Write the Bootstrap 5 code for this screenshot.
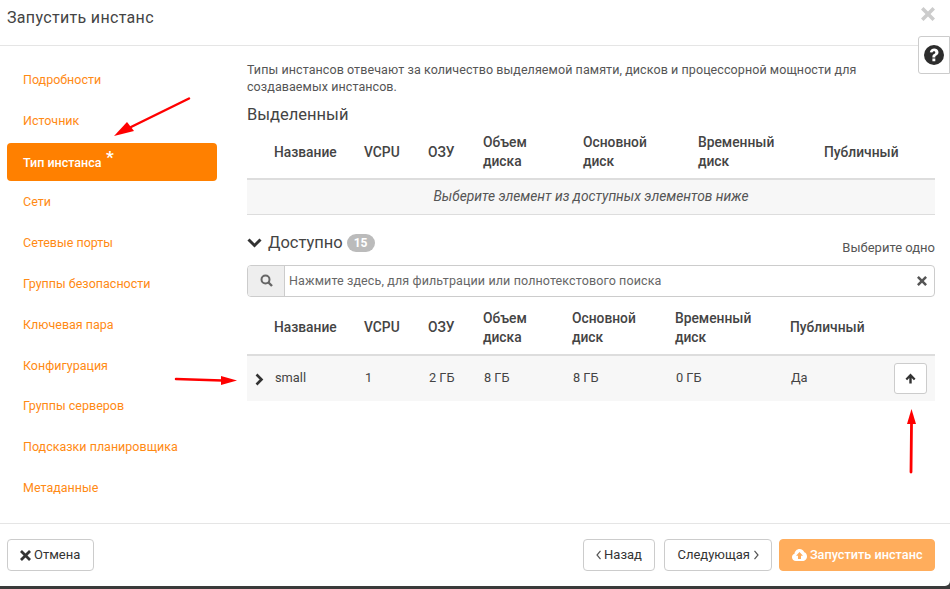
<!DOCTYPE html>
<html lang="ru"><head><meta charset="utf-8"><title>Запустить инстанс</title>
<link href="https://cdn.jsdelivr.net/npm/bootstrap@5.3.0/dist/css/bootstrap.min.css" rel="stylesheet">
<style>
html,body{height:589px;overflow:hidden;background:#fff}
body{font-family:Roboto,"Liberation Sans",sans-serif;font-size:13px;color:#333;position:relative}
.dlg{height:586px;display:flex;flex-direction:column;border-bottom-right-radius:5px;background:#fff}
.wrapper{height:589px;background:#3a3a3a}
.dlg-head{height:46px;border-bottom:1px solid #e5e5e5;padding:9px 7px 0;flex:none;position:relative}
.dlg-title{font-size:16px;line-height:18px;color:#444;margin:0;font-weight:400;letter-spacing:.33px}
.dlg-close{position:absolute;right:15px;top:7px;width:14px;height:14px}
.help-box{position:absolute;right:0;top:36px;width:32px;height:38px;background:#fff;border:1px solid #ccc;border-radius:3px 0 0 3px;display:flex;align-items:center;justify-content:center}
.dlg-main{flex:1;display:flex;min-height:0}
.side{width:240px;flex:none;padding:15px 23px 0 7px}
.side-link{display:block;height:38px;line-height:38px;margin-bottom:2.8px;padding-left:16px;color:#ff8a14;font-size:12.5px;text-decoration:none;border-radius:4px}
.side-link.on{background:#ff8000;color:#fff;font-weight:500;position:relative;margin-top:2.800px;margin-bottom:2.800px;line-height:39px}
.req{position:absolute;left:99px;top:4px;font-size:17px;line-height:20px;font-weight:700}
.pane{flex:1;padding:15px 15px 0 7px;min-width:0}
.intro{font-size:12.5px;line-height:17px;color:#555;margin:0;letter-spacing:.08px}
.h-sel{font-size:16.500px;line-height:20px;color:#444;margin:10px 0 0;font-weight:400}
.tbl{width:100%;table-layout:fixed;border-collapse:collapse;margin:0;font-size:13.8px}
.tbl th{font-weight:500;color:#444;line-height:19px;padding:1px 0 0 0;vertical-align:middle;border-bottom:2px solid #ddd}
.tbl.one thead tr{height:54px}
.tbl.two thead tr{height:50px}
.tbl.two th{padding:0 0 3px}
.tbl td{vertical-align:middle;color:#444;background:#f7f7f7;font-size:12.800px}
.tbl td.empty{height:35px;text-align:center;font-style:italic;color:#555;border-bottom:1px solid #ddd;font-size:13.8px}
.avail-row{height:26px;margin-top:17px;display:flex;align-items:flex-start;justify-content:space-between}
.avail{font-size:16.500px;line-height:22px;color:#444;display:flex;align-items:center;gap:6px}
.cnt{background:#bbb;color:#fff;border-radius:9px;font-size:12px;font-weight:700;padding:0 7px;line-height:18px;margin-left:-2px}
.pick{font-size:13px;color:#555;line-height:15px;margin-top:8px}
.srch{height:32px;margin-top:7px;border:1px solid #ccc;border-radius:4px;display:flex;align-items:center;font-size:12.5px;color:#666}
.srch-add{width:37px;height:30px;background:#eee;border-right:1px solid #ccc;display:flex;align-items:center;justify-content:center;border-radius:3px 0 0 3px;flex:none}
.srch-text{flex:1;padding:1px 0 0 4px;letter-spacing:.12px}
.srch-x{margin-right:7px}
.row-small{height:46px}
.chev{margin-left:7px}
.cell-up{text-align:right;padding-right:8px}
.up-btn{width:33px;height:31px;background:#fff;border:1px solid #ccc;border-radius:3px;display:inline-flex;align-items:center;justify-content:center;padding:0;vertical-align:middle}
.dlg-foot{height:63px;flex:none;border-top:1px solid #e5e5e5;padding:15px 15px 0 7px;display:flex;justify-content:space-between}
.act{height:32px;line-height:30px;border:1px solid #ccc;border-radius:4px;background:#fff;color:#333;font-size:13px;padding:0 12px;display:inline-flex;align-items:center;gap:3px}
.act.cancel{padding-right:13px}
.act.nav-back{padding:0 12px}
.act.nav-next{padding:0 12.500px;gap:4px;margin-left:1px}
.act.go{background:#ffad5c;border-color:#ffad5c;color:#fff;font-weight:500;font-size:12.7px;margin-left:-1px;padding:0 11.500px}
.arrows{position:absolute;left:0;top:0;pointer-events:none}
</style></head>
<body><div class="wrapper"><div class="dlg">
<div class="dlg-head"><h1 class="dlg-title">Запустить инстанс</h1>
<svg class="dlg-close" viewBox="0 0 14 14"><path d="M2.500 0 7 4.500 11.500 0 14 2.500 9.500 7 14 11.500 11.500 14 7 9.500 2.500 14 0 11.500 4.500 7 0 2.500z" fill="#ccc"/></svg>
<div class="help-box"><svg width="20" height="20" viewBox="0 0 20 20"><circle cx="10" cy="10" r="10" fill="#2d2d2d"/><path d="M5.800 7.200C6.100 4.800 8 3.400 10.200 3.400c2.400 0 4.300 1.500 4.300 3.800 0 1.800-1.100 2.600-2.100 3.300-.8.500-1.100.8-1.100 1.500v.5H8.400v-.8c0-1.400.7-2.100 1.600-2.700.8-.5 1.300-.9 1.300-1.600 0-.8-.5-1.200-1.300-1.200-.9 0-1.400.6-1.600 1.400zM8.400 13.500h2.900v2.700H8.400z" fill="#fff"/></svg></div>
</div>
<div class="dlg-main">
<nav class="side">
<a class="side-link" href="#">Подробности</a>
<a class="side-link" href="#">Источник</a>
<a class="side-link on" href="#">Тип инстанса<span class="req">*</span></a>
<a class="side-link" href="#">Сети</a>
<a class="side-link" href="#">Сетевые порты</a>
<a class="side-link" href="#">Группы безопасности</a>
<a class="side-link" href="#">Ключевая пара</a>
<a class="side-link" href="#">Конфигурация</a>
<a class="side-link" href="#">Группы серверов</a>
<a class="side-link" href="#">Подсказки планировщика</a>
<a class="side-link" href="#">Метаданные</a>
</nav>
<div class="pane">
<p class="intro">Типы инстансов отвечают за количество выделяемой памяти, дисков и процессорной мощности для создаваемых инстансов.</p>
<div class="h-sel">Выделенный</div>
<table class="tbl one"><colgroup><col style="width:27px"><col style="width:90px"><col style="width:64px"><col style="width:55px"><col style="width:100px"><col style="width:115px"><col style="width:126px"><col></colgroup>
<thead><tr><th></th><th>Название</th><th>VCPU</th><th>ОЗУ</th><th>Объем<br>диска</th><th>Основной<br>диск</th><th>Временный<br>диск</th><th>Публичный</th></tr></thead>
<tbody><tr><td class="empty" colspan="8">Выберите элемент из доступных элементов ниже</td></tr></tbody></table>
<div class="avail-row"><div class="avail"><svg width="15" height="11" viewBox="0 0 15 11"><path d="M1.500 2.500 7.500 8.500 13.500 2.500" fill="none" stroke="#333" stroke-width="3"/></svg>Доступно <span class="cnt">15</span></div><div class="pick">Выберите одно</div></div>
<div class="srch"><span class="srch-add"><svg width="13" height="13" viewBox="0 0 13 13"><circle cx="5.500" cy="5.500" r="4" fill="none" stroke="#666" stroke-width="2"/><path d="M8.500 8.500 12 12" stroke="#666" stroke-width="2.400"/></svg></span><span class="srch-text">Нажмите здесь, для фильтрации или полнотекстового поиска</span>
<svg class="srch-x" width="10" height="10" viewBox="0 0 14 14"><path d="M2.500 0 7 4.500 11.500 0 14 2.500 9.500 7 14 11.500 11.500 14 7 9.500 2.500 14 0 11.500 4.500 7 0 2.500z" fill="#555"/></svg></div>
<table class="tbl two mt-2"><colgroup><col style="width:27px"><col style="width:90px"><col style="width:64px"><col style="width:55px"><col style="width:89px"><col style="width:103px"><col style="width:115px"><col style="width:100px"><col></colgroup>
<thead><tr><th></th><th>Название</th><th>VCPU</th><th>ОЗУ</th><th>Объем<br>диска</th><th>Основной<br>диск</th><th>Временный<br>диск</th><th class="text-nowrap">Публичный</th><th></th></tr></thead>
<tbody><tr class="row-small"><td><svg class="chev" width="9" height="13" viewBox="0 0 9 13"><path d="M1.500 1.500 6.500 6.500 1.500 11.500" fill="none" stroke="#333" stroke-width="2.600"/></svg></td><td>small</td><td>1</td><td>2 ГБ</td><td>8 ГБ</td><td>8 ГБ</td><td>0 ГБ</td><td>Да</td><td class="cell-up"><button class="up-btn" type="button"><svg width="11" height="11" viewBox="0 0 11 11"><path d="M5.500.5 10.500 5.800 8.900 7.200 6.700 4.900V10.500H4.300V4.900L2.100 7.200.5 5.800z" fill="#333"/></svg></button></td></tr></tbody></table>
</div></div>
<div class="dlg-foot"><button class="act cancel" type="button"><svg width="11" height="11" viewBox="0 0 14 14"><path d="M2.500 0 7 4.500 11.500 0 14 2.500 9.500 7 14 11.500 11.500 14 7 9.500 2.500 14 0 11.500 4.500 7 0 2.500z" fill="#333"/></svg>Отмена</button>
<div class="d-flex gap-2"><button class="act nav-back" type="button"><svg width="5" height="10" viewBox="0 0 5 10"><path d="M4.500.8 1 5 4.500 9.200" fill="none" stroke="#555" stroke-width="1.200"/></svg>Назад</button><button class="act nav-next" type="button">Следующая<svg width="5" height="10" viewBox="0 0 5 10"><path d="M.5.8 4 5 .5 9.200" fill="none" stroke="#555" stroke-width="1.200"/></svg></button><button class="act go" type="button"><svg width="15" height="12" viewBox="0 0 15 12"><path d="M4 12C1.800 12 0 10.400 0 8.300 0 6.700 1 5.300 2.500 4.800 2.700 2.200 4.800 0 7.600 0c2.200 0 4 1.400 4.700 3.300C13.900 3.800 15 5.400 15 7.400 15 9.900 13 12 10.500 12z" fill="#fff"/><path d="M7.500 3 11 6.700H9V10H6V6.700H4z" fill="#ffad5c"/></svg>Запустить инстанс</button></div></div>
</div></div>
<svg class="arrows" width="950" height="589" viewBox="0 0 950 589">
<g fill="red" stroke="none">
<path d="M189 98.500 131 127" stroke="red" stroke-width="2.500" stroke-linecap="round"/><path d="M114 136 127 122 134 131z"/>
<path d="M176 379 222 380.500" stroke="red" stroke-width="2.500" stroke-linecap="round"/><path d="M237 380.500 221 376 221 385z"/>
<path d="M911 472 911.500 424" stroke="red" stroke-width="2.800" stroke-linecap="round"/><path d="M911.500 409 907 424 916 424z"/>
</g></svg>
</body></html>
